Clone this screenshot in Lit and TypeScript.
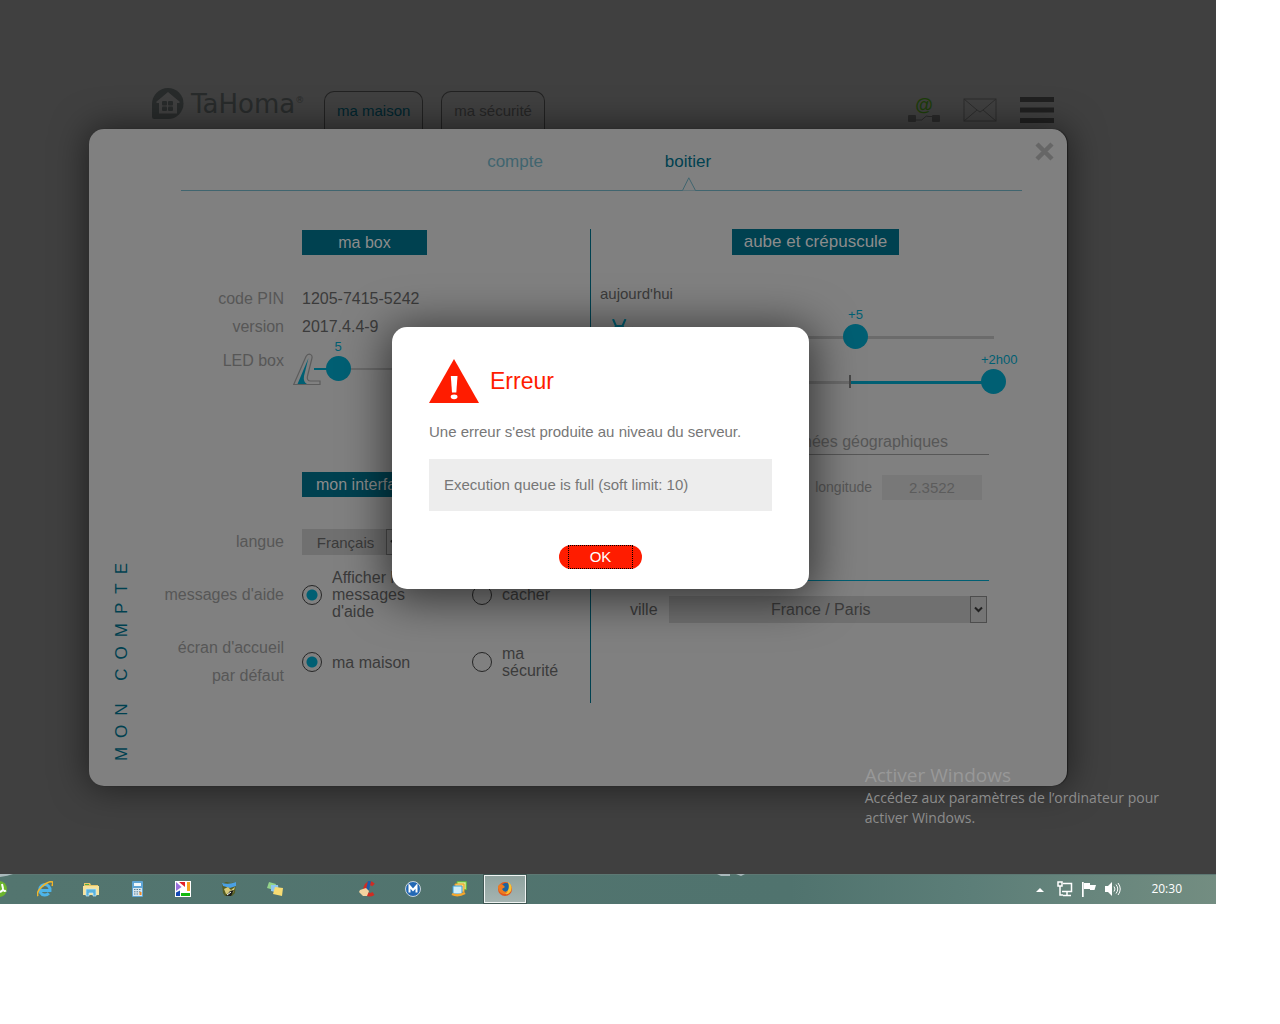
import { LitElement, html, css, svg, nothing } from 'lit';
import { customElement, property } from 'lit/decorators.js';

@customElement('value-slider')
export class ValueSlider extends LitElement {
    static styles = css`
    :host {
        display: block;
        position: relative;
        height: 25px;
    }

    input {
        display: block;
        appearance: none;
        width: 100%;
        height: 25px;
        margin: 0;
        background: none;
        position: relative;
    }

    input::-webkit-slider-thumb {
        appearance: none;
        width: 25px;
        height: 25px;
        border-radius: 50%;
        background: #005f73;
    }

    .rail {
        position: absolute;
        inset: 12px 12px auto;
        height: 3px;
        background: #6b6b6b;
    }

    .rail.thin {
        height: 2px;
    }

    .fill {
        position: absolute;
        top: 0;
        height: 100%;
        background: #005f73;
    }

    .tick {
        position: absolute;
        top: -6px;
        left: 50%;
        width: 2px;
        height: 13px;
        margin-left: -1px;
        background: #474747;
    }

    .thumb-area {
        position: absolute;
        inset: -17px 25px auto 0;
    }

    output {
        position: absolute;
        width: 25px;
        font: 13px/16px 'Liberation Sans', Arial, sans-serif;
        color: #005f73;
        text-align: center;
        white-space: nowrap;
    }
    `;

    @property({ type: Number }) min = 0;
    @property({ type: Number }) max = 100;
    @property({ type: Number }) value = 0;
    @property({ type: Number }) origin = 0;
    @property() text = '';
    @property() name = '';
    @property({ type: Boolean }) centered = false;

    private percent(value: number) {
        return ((value - this.min) / (this.max - this.min)) * 100;
    }

    render() {
        const from = this.percent(this.origin);
        const to = this.percent(this.value);
        return html`
        <div class="rail ${this.centered ? '' : 'thin'}">
            <div class="fill" style="left: ${from}%; width: ${to - from}%"></div>
            ${this.centered ? html`<div class="tick"></div>` : nothing}
        </div>
        <div class="thumb-area">
            <output style="left: ${to}%">${this.text}</output>
        </div>
        <input type="range" aria-label=${this.name} .min=${String(this.min)} .max=${String(this.max)} .value=${String(this.value)}>
        `;
    }
}

@customElement('account-panel')
export class AccountPanel extends LitElement {
    static styles = css`
    :host {
        display: block;
        position: relative;
        background: #808080;
        border-radius: 15px;
        box-shadow: 1px 0 1px #1c1c1c, 0 0 35px 2px rgba(0, 0, 0, 0.5);
        font: 16px/28px 'Liberation Sans', Arial, sans-serif;
        color: #3b3b3b;
    }

    .close {
        position: absolute;
        top: 13px;
        right: 13px;
        width: 19px;
        height: 19px;
        padding: 0;
        border: 0;
        background: none;
    }

    .close svg {
        display: block;
    }

    nav {
        display: flex;
        justify-content: center;
        margin: 0 45px 0 92px;
        border-bottom: 1px solid #40656f;
        font-size: 17px;
        line-height: 22px;
    }

    nav a {
        position: relative;
        width: 173px;
        padding: 22px 0 17px;
        color: #40656f;
        text-align: center;
        text-decoration: none;
    }

    nav a.active {
        color: #004150;
    }

    .notch {
        position: absolute;
        left: 80px;
        bottom: -1px;
    }

    .body {
        display: flex;
        padding-top: 38px;
    }

    aside {
        display: flex;
        align-items: flex-end;
        flex: 0 0 63px;
        padding-bottom: 25px;
        box-sizing: border-box;
    }

    aside span {
        margin-left: 23px;
        writing-mode: vertical-rl;
        transform: rotate(180deg);
        font-size: 17px;
        line-height: 20px;
        letter-spacing: 9px;
        color: #004150;
        white-space: nowrap;
    }

    .settings {
        flex: 0 0 439px;
        box-sizing: border-box;
        margin-bottom: 83px;
        padding: 1px 0 13px;
        border-right: 1px solid #004150;
    }

    .dusk {
        flex: 1;
        padding: 0 36px 0 9px;
    }

    h2 {
        width: 125px;
        margin: 0 0 30px 150px;
        background: #004150;
        color: #8c8c8c;
        font-size: 16px;
        font-weight: normal;
        line-height: 25px;
        text-align: center;
    }

    .dusk h2 {
        width: fit-content;
        margin: 0 auto 29px;
        padding: 0 12px;
        font-size: 17px;
        line-height: 26px;
    }

    .row {
        display: grid;
        grid-template-columns: 132px 1fr;
        column-gap: 18px;
    }

    .name {
        color: #575757;
        text-align: right;
    }

    .led {
        margin-top: 6px;
    }

    .led > div {
        position: relative;
        padding-top: 9px;
    }

    .led svg {
        position: absolute;
        top: 6px;
        left: -9px;
    }

    .led value-slider {
        width: 119px;
    }

    .interface {
        margin-top: 91px;
    }

    .interface h2 {
        margin-bottom: 32px;
    }

    .interface .row {
        align-items: center;
        margin-bottom: 14px;
    }

    .interface .row:last-child {
        margin-bottom: 0;
    }

    .interface .lang {
        line-height: 26px;
    }

    .options {
        display: grid;
        grid-template-columns: 170px 1fr;
    }

    .option {
        display: flex;
        align-items: center;
        gap: 10px;
        padding-right: 26px;
        line-height: 17px;
    }

    .option input {
        appearance: none;
        flex: none;
        width: 20px;
        height: 20px;
        margin: 0;
        border: 1px solid #262626;
        border-radius: 50%;
    }

    .option input:checked {
        background: radial-gradient(circle, #005f73 5px, transparent 6px);
    }

    .select {
        position: relative;
        display: flex;
        height: 27px;
    }

    .lang .select {
        width: 101px;
        height: 26px;
    }

    select {
        appearance: none;
        width: 100%;
        padding: 0 14px 0 0;
        border: 0;
        border-radius: 0;
        background: #707070;
        color: #3b3b3b;
        font: 16px 'Liberation Sans', Arial, sans-serif;
        text-align-last: center;
    }

    .lang select {
        font-size: 15px;
    }

    .arrow {
        position: absolute;
        inset: 0 0 0 auto;
        width: 17px;
        box-sizing: border-box;
        border: 1px solid #4d4d4d;
        background: #757575;
        pointer-events: none;
        display: flex;
        align-items: center;
        justify-content: center;
    }

    .today {
        font-size: 15px;
        line-height: 20px;
        margin: 0 0 10px;
    }

    .sun {
        display: flex;
        align-items: center;
        height: 45px;
    }

    .sun > div {
        flex: 0 0 81px;
        padding-left: 12px;
        height: 36px;
    }

    .sun value-slider {
        flex: 0 0 313px;
    }

    h3 {
        margin: 26px 42px 20px 0;
        padding-right: 41px;
        border-bottom: 1px solid #575757;
        color: #575757;
        font-size: 16px;
        font-weight: normal;
        line-height: 24px;
        text-align: right;
    }

    .geo {
        display: flex;
        justify-content: flex-end;
        align-items: center;
        gap: 10px;
        margin-right: 42px;
        padding: 0 7px 80px 0;
        border-bottom: 1px solid #005f73;
        color: #575757;
        font-size: 15px;
        line-height: 25px;
    }

    .geo label {
        font-size: 14px;
    }

    .geo input {
        width: 100px;
        height: 25px;
        box-sizing: border-box;
        padding: 0;
        border: 0;
        background: #787878;
        color: #5c5c5c;
        font: inherit;
        text-align: center;
    }

    .city {
        display: flex;
        align-items: center;
        gap: 11px;
        margin: 15px 44px 0 30px;
        line-height: 27px;
    }

    .city .select {
        flex: 1;
    }
    `;

    private arrow() {
        return html`<span class="arrow"><svg width="9" height="7" viewBox="0 0 9 7"><path d="M1 1.500 4.500 5 8 1.500" fill="none" stroke="#222" stroke-width="2"/></svg></span>`;
    }

    render() {
        return html`
        <button class="close" aria-label="fermer">
            <svg width="19" height="19" viewBox="0 0 19 19"><path d="M2 2 17 17M17 2 2 17" stroke="#666" stroke-width="4.400"/></svg>
        </button>
        <nav>
            <a href="#compte">compte</a>
            <a href="#boitier" class="active">boitier
                <svg class="notch" width="14" height="14" viewBox="0 0 14 14"><path d="M.5 13.500 6.800.8l6.700 12.700z" fill="#808080"/><path d="M.5 13.500 6.800.8l6.700 12.700" fill="none" stroke="#40656f"/></svg>
            </a>
        </nav>
        <div class="body">
            <aside><span>MON COMPTE</span></aside>
            <section class="settings">
                <h2>ma box</h2>
                <div class="row"><span class="name">code PIN</span><span>1205-7415-5242</span></div>
                <div class="row"><span class="name">version</span><span>2017.4.4-9</span></div>
                <div class="row led">
                    <span class="name">LED box</span>
                    <div>
                        <svg width="28" height="33" viewBox="0 0 28 33">
                            <path d="M.7 31.500 13 3.500Q14.500.7 17 1.300q2.600.8 2 3.700L14.500 23q-1 5 3 5h9.500v3.500z" fill="none" stroke="#5c5c5c" stroke-width="1.200"/>
                            <path d="M4.500 31 15.500 5 11 23q-1 6 3 8z" fill="#005f73"/>
                        </svg>
                        <value-slider name="LED box" .max=${20} .value=${5} text="5"></value-slider>
                    </div>
                </div>

                <div class="interface">
                    <h2>mon interface</h2>
                    <div class="row lang">
                        <label class="name" for="lang">langue</label>
                        <div class="select"><select id="lang"><option>Français</option></select>${this.arrow()}</div>
                    </div>
                    <div class="row">
                        <span class="name">messages d'aide</span>
                        <div class="options">
                            <label class="option"><input type="radio" name="help" checked>Afficher les messages d'aide</label>
                            <label class="option"><input type="radio" name="help">cacher</label>
                        </div>
                    </div>
                    <div class="row">
                        <span class="name">écran d'accueil<br>par défaut</span>
                        <div class="options">
                            <label class="option"><input type="radio" name="home" checked>ma maison</label>
                            <label class="option"><input type="radio" name="home">ma sécurité</label>
                        </div>
                    </div>
                </div>
            </section>

            <section class="dusk">
                <h2>aube et crépuscule</h2>
                <p class="today">aujourd'hui</p>
                <div class="sun">
                    <div><svg width="24" height="36" viewBox="0 0 24 36"><g fill="none" stroke="#005f73" stroke-width="2"><path d="M1 0 4 7H10.500L13.500 0M4 7 1 13M10.500 7l3.500 6M18 11l3-2.500"/></g></svg></div>
                    <value-slider name="aube" centered .min=${-120} .max=${120} .value=${5} text="+5"></value-slider>
                </div>
                <div class="sun">
                    <div></div>
                    <value-slider name="crépuscule" centered .min=${-120} .max=${120} .value=${120} text="+2h00"></value-slider>
                </div>
                <h3>coordonnées géographiques</h3>
                <div class="geo">
                    <label for="longitude">longitude</label>
                    <input id="longitude" type="text" value="2.3522">
                </div>
                <div class="city">
                    <label for="city">ville</label>
                    <div class="select"><select id="city"><option>France / Paris</option></select>${this.arrow()}</div>
                </div>
            </section>
        </div>
        `;
    }
}

@customElement('error-dialog')
export class ErrorDialog extends LitElement {
    static styles = css`
    :host {
        display: block;
        width: 417px;
        box-sizing: border-box;
        padding: 32px 37px 20px;
        border-radius: 15px;
        background: #fff;
        box-shadow: 0 5px 45px 5px rgba(0, 0, 0, 0.6);
        font: 15px/22px 'Liberation Sans', Arial, sans-serif;
        color: #777;
    }

    header {
        display: flex;
        align-items: center;
        gap: 11px;
    }

    h1 {
        margin: 0;
        color: #ff1c00;
        font-size: 23px;
        line-height: 44px;
        font-weight: normal;
    }

    p {
        margin: 18px 0 16px;
    }

    .detail {
        margin-bottom: 34px;
        padding: 15px;
        background: #ededed;
    }

    button {
        display: block;
        width: 83px;
        height: 24px;
        margin: 0 auto;
        padding: 0 9px;
        border: 0;
        border-radius: 12px;
        background: #ff1c00;
        color: #fff;
        font: 15px/22px 'Liberation Sans', Arial, sans-serif;
    }

    button span {
        display: block;
        border: 1px dotted #000;
    }
    `;

    render() {
        return html`
        <header>
            <svg width="50" height="44" viewBox="0 0 50 44">
                <path d="M25 0 50 44H0z" fill="#ff1c00"/>
                <path d="M21.800 17h6.700l-1.200 16.500h-4.300z" fill="#fff"/>
                <ellipse cx="25.100" cy="37.800" rx="3.400" ry="2.400" fill="#fff"/>
            </svg>
            <h1>Erreur</h1>
        </header>
        <p>Une erreur s'est produite au niveau du serveur.</p>
        <div class="detail">Execution queue is full (soft limit: 10)</div>
        <button><span>OK</span></button>
        `;
    }
}

const taskIcons = [
    { name: 'uTorrent', icon: svg`<circle cx="8" cy="8" r="8" fill="#6cb52d"/><path d="M5 3 6.500 9q1 2.500 3.500 1.500t2-3L11 3m1 5q1 3 3 1.500" fill="none" stroke="#fff" stroke-width="2"/>` },
    { name: 'Internet Explorer', icon: svg`<path d="M3.500 9.500H13A5.200 5.200 0 1 0 11.800 12.200" fill="none" stroke="#4db4ea" stroke-width="3"/><path d="M1 15Q-1 12 4 6.500 11 0 15 .8q1.500 1 0 4" fill="none" stroke="#f0b62c" stroke-width="1.700"/>` },
    { name: 'Explorateur', icon: svg`<path d="M1 2h6l1 2h7v10H1z" fill="#e8c566"/><path d="M2 3h4v1H2z" fill="#4fae45"/><path d="M0 5h16v9H0z" fill="#f7e29a"/><path d="M3 15V8h10v7h-3v-3H6v3z" fill="#59b2dc" stroke="#c5eafa" stroke-width=".7"/>` },
    { name: 'Calculatrice', icon: svg`<rect x="3" width="11" height="16" rx="1" fill="#5fa5d5"/><path d="M5 2h7v3H5z" fill="#eff8fc"/><path d="M4 7h9v8H4z" fill="#d7e7ef"/><path d="M5 8.500h7M5 10.800h7M5 13h4" stroke="#5b7d93" stroke-dasharray="1.500 1"/><path d="M10.500 11h2v3h-2z" fill="#ef8b25"/>` },
    { name: 'Picasa', icon: svg`<path d="M0 0h16v16H0z" fill="#fff"/><path d="M1 1 6.500 6 1 10z" fill="#9a6fdc"/><path d="M4 1h6v5z" fill="#e3222a"/><path d="M12 1h3v9h-3z" fill="#f7a420"/><path d="M6 12h9v3H6z" fill="#12b80e"/><path d="M1 11.500 5 9.500V15H1z" fill="#1448b5"/>` },
    { name: 'Cartes', icon: svg`<path d="M1 3 5 1l5 1 5-1-1 11-3 3H4L2 12z" fill="#555d24"/><path d="M1 2q7 2 14-1v4L9 7 2 5z" fill="#4aa0e4"/><path d="m3 8 4-2 3 3 4-3-2 6-7 1z" fill="#d6ca79"/><path d="m5 15 4-5 4-1-3 6z" fill="#1d1f19"/><path d="m6 14 4-3" stroke="#fff"/>` },
    { name: 'Notes', icon: svg`<path d="m2 1 7 2-2 6-7-2z" fill="#93d38a"/><path d="m4 4 7 0 1 8-8-2z" fill="#8fc8ef"/><path d="m8 6 8 1-1 8-9-2z" fill="#f7dc73"/>` },
    null,
    { name: 'CCleaner', icon: svg`<path d="M14.500 4Q11 .5 7.500 4q-3 5 0 8.500 3 2.500 7 0" fill="none" stroke="#cf2c22" stroke-width="3.600"/><path d="m10.500 0-2 9" stroke="#1c5caa" stroke-width="3"/><path d="m1 9 6-2 3 3-2 5H4L0 11z" fill="#f3d3a0"/>` },
    { name: 'Maxthon', icon: svg`<circle cx="8" cy="8" r="7.500" fill="#2368b5" stroke="#c8d3da"/><path d="M4.500 11.500V5l3.500 4 3.500-4v6.500" fill="none" stroke="#fff" stroke-width="2"/>` },
    { name: 'Photos', icon: svg`<path d="M6 .7h9.300v8H6z" fill="#d5ea8e" stroke="#5eb83d"/><path d="M4 3h9v8H4z" fill="#fbd97e" stroke="#f39a20"/><path d="M2 5h9v8H2z" fill="#cdeefa" stroke="#3a9bd6"/><path d="M1 13q6 3 13-1" fill="none" stroke="#f5a72c" stroke-width="2.500"/>` },
    { name: 'Firefox', active: true, icon: svg`<circle cx="8" cy="8" r="7" fill="#e0561d"/><circle cx="9" cy="7" r="5" fill="#1c639f"/><path d="M11 1q5 3 3 9-3 5-8 2 8-1 5-11" fill="#f9c534"/><path d="M1 5q2-3 5-1l2 2-3 2q2 4 6 2-2 5-7 2Q1 10 1 5" fill="#ee7b20"/>` },
];

@customElement('task-bar')
export class TaskBar extends LitElement {
    static styles = css`
    :host {
        display: flex;
        align-items: center;
        position: relative;
        height: 30px;
        overflow: hidden;
        background: linear-gradient(90deg, #53756f, #50736e 65%, #5c7e78 80%, #738d81);
        box-shadow: inset 0 1px #5d7873;
        color: #fff;
        font: 12px/30px 'Open Sans', sans-serif;
    }

    .glints {
        position: absolute;
        top: 0;
        left: 0;
    }

    .apps {
        display: flex;
        flex: 1;
        margin-left: -24px;
    }

    .app {
        display: flex;
        align-items: center;
        justify-content: center;
        flex: 0 0 42px;
        height: 28px;
        box-sizing: border-box;
        margin: 0 2px;
        padding: 0;
        border: 0;
        background: none;
    }

    .app.active {
        border: 1px solid #f0f4f3;
        background: linear-gradient(#8fa39f, #a5b4b1);
        outline: 1px solid #3f5753;
    }

    .tray {
        display: flex;
        align-items: center;
        gap: 8px;
        margin-right: 34px;
    }

    .tray time {
        margin-left: 22px;
    }

    .tray svg:first-child {
        margin-right: 5px;
    }
    `;

    render() {
        return html`
        <svg class="glints" width="760" height="4" viewBox="0 0 760 4"><path d="M0 0h13Q8 2 0 3zM717 0h13v2h-9zM736 0h9l-4 2z" fill="#a9b8bb"/></svg>
        <div class="apps">
            ${taskIcons.map(item => item
                ? html`<button class="app ${item.active ? 'active' : ''}" aria-label=${item.name}><svg width="16" height="16" viewBox="0 0 16 16">${item.icon}</svg></button>`
                : html`<span class="app"></span>`)}
        </div>
        <div class="tray">
            <svg width="8" height="5" viewBox="0 0 8 5"><path d="M0 5 4 1l4 4z" fill="#fff"/></svg>
            <svg width="16" height="16" viewBox="0 0 16 16" fill="none" stroke="#fff" stroke-width="1.500"><path d="M6 2.500h8.500v8H5M10 10.500v4M6 14.500h8"/><path d="M1 1h4v4H1zM3 5v9h3"/></svg>
            <svg width="16" height="16" viewBox="0 0 16 16"><path d="M1 1h1.700v15H1zM3 2h6v2l6 0-1.500 5H9V8H3z" fill="#fff"/></svg>
            <svg width="16" height="16" viewBox="0 0 16 16"><path d="M0 5h3l4-4v14l-4-4H0z" fill="#fff"/><path d="M9 5.500q2 2.500 0 5M11 3.500q3.500 4.500 0 9M13 2q4.500 6 0 12" fill="none" stroke="#fff"/></svg>
            <time>20:30</time>
        </div>
        `;
    }
}

@customElement('app-root')
export class AppRoot extends LitElement {
    static styles = css`
    :host {
        display: block;
        min-height: 100vh;
        background: #fff;
        font-family: 'Liberation Sans', Arial, sans-serif;
    }

    .screen {
        width: 95%;
    }

    .desktop {
        position: relative;
        padding: 88px 149px 88px 89px;
        background: #404040;
        overflow: hidden;
    }

    .top {
        display: flex;
        align-items: flex-end;
        height: 41px;
        padding: 0 13px 0 63px;
    }

    .logo {
        display: flex;
        align-self: flex-start;
        gap: 7px;
        flex: 0 0 172px;
        color: #282b2b;
        font: 26px/32px 'DejaVu Sans', sans-serif;
    }

    .logo sup {
        font-size: 9px;
        line-height: 24px;
        vertical-align: top;
    }

    .tab {
        height: 37px;
        box-sizing: content-box;
        margin-right: 18px;
        padding: 0 12px;
        border: 1px solid #222;
        border-bottom: 0;
        border-radius: 10px 10px 0 0;
        color: #262626;
        font-size: 15px;
        line-height: 38px;
        text-decoration: none;
    }

    .tab.active {
        color: #00252e;
    }

    .tools {
        display: flex;
        align-items: center;
        gap: 23px;
        margin-left: auto;
        padding-bottom: 5px;
    }

    .tools button {
        padding: 0;
        border: 0;
        background: none;
    }

    .tools svg {
        display: block;
    }

    .tools .link {
        color: #1d3d0a;
        font: bold 18px/18px 'Liberation Sans', Arial, sans-serif;
    }

    .overlay {
        position: absolute;
        inset: 0;
        display: flex;
        justify-content: center;
        align-items: flex-start;
        padding: 327px 15px 0 0;
    }

    .watermark {
        position: absolute;
        right: 57px;
        bottom: 46px;
        color: #8c8c8c;
        font: 14px/20px 'Open Sans', sans-serif;
        white-space: nowrap;
        pointer-events: none;
    }

    .watermark strong {
        display: block;
        color: #989898;
        font-size: 19px;
        line-height: 26px;
        font-weight: normal;
    }
    `;

    render() {
        return html`
        <div class="screen">
            <div class="desktop">
                <header class="top">
                    <div class="logo">
                        <svg width="32" height="32" viewBox="0 0 32 32">
                            <path d="M16 0a15.500 15.500 0 0 1 0 31H2.500Q0 31 0 28.500V16A16 16 0 0 1 16 0" fill="#282b2b"/>
                            <path d="M16 4 28 14l-1 1h-2v10.500H7V15H5l-1-1z" fill="#404040"/>
                            <rect x="10" y="13" width="5" height="4.500" rx="1" fill="#282b2b"/>
                            <rect x="16" y="13" width="5" height="4.500" rx="1" fill="#282b2b"/>
                            <rect x="10" y="18.500" width="5" height="4.500" rx="1" fill="#282b2b"/>
                            <rect x="16" y="18.500" width="5" height="4.500" rx="1" fill="#282b2b"/>
                        </svg>
                        <span>TaHoma<sup>®</sup></span>
                    </div>
                    <a class="tab active" href="#maison">ma maison</a>
                    <a class="tab" href="#securite">ma sécurité</a>
                    <div class="tools">
                        <button class="link" aria-label="connexion">@
                            <svg width="32" height="10" viewBox="0 0 32 10"><rect y="1" width="8" height="7" rx="1" fill="#2a2a2a"/><rect x="24" y="1" width="8" height="7" rx="1" fill="#2a2a2a"/><path d="M8 6h3q3 1 5-2t5-1.500h3" fill="none" stroke="#2a2a2a"/></svg>
                        </button>
                        <button aria-label="messages">
                            <svg width="34" height="24" viewBox="0 0 34 24" fill="none" stroke="#2d2d2d"><rect x="1" y="1" width="32" height="22"/><path d="m1 1 13 11L1 23M33 1 20 12l13 11M14 12l3 2 3-2"/></svg>
                        </button>
                        <button aria-label="menu">
                            <svg width="34" height="26" viewBox="0 0 34 26"><path d="M0 0h34v5H0zM0 10.500h34v5H0zM0 21h34v5H0z" fill="#202020"/></svg>
                        </button>
                    </div>
                </header>
                <account-panel></account-panel>
                <div class="overlay"><error-dialog></error-dialog></div>
                <div class="watermark">
                    <strong>Activer Windows</strong>
                    Accédez aux paramètres de l’ordinateur pour<br>activer Windows.
                </div>
            </div>
            <task-bar></task-bar>
        </div>
        `;
    }
}

declare global {
    interface HTMLElementTagNameMap {
        'value-slider': ValueSlider;
        'account-panel': AccountPanel;
        'error-dialog': ErrorDialog;
        'task-bar': TaskBar;
        'app-root': AppRoot;
    }
}
